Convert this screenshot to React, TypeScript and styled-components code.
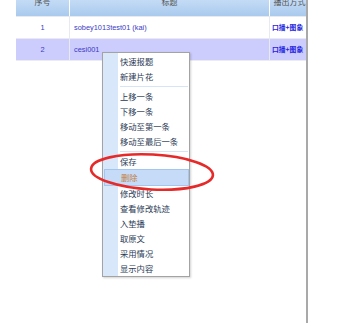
import styled, { createGlobalStyle } from 'styled-components';

const GlobalStyle = createGlobalStyle`
  html, body {
    margin: 0;
    padding: 0;
    background: #fff;
  }
  body {
    font-family: "Liberation Sans", "Noto Sans CJK SC", sans-serif;
  }
`;

const rows = [
  { no: '1', title: 'sobey1013test01 (kai)', mode: '口播+图象', selected: false },
  { no: '2', title: 'cesi001', mode: '口播+图象', selected: true },
];

const menuGroups = [
  ['快速报题', '新建片花'],
  ['上移一条', '下移一条', '移动至第一条', '移动至最后一条'],
  ['保存', '删除', '修改时长', '查看修改轨迹', '入垫播', '取原文', '采用情况', '显示内容'],
];

const App = () => {
  return (
    <Page>
      <GlobalStyle />
      <Frame>
        <Grid>
          <HeadCell>序号</HeadCell>
          <HeadCell>标题</HeadCell>
          <HeadCell>播出方式</HeadCell>
          {rows.map((r) => (
            <Row key={r.no} $selected={r.selected}>
              <Cell $center>{r.no}</Cell>
              <Cell>{r.title}</Cell>
              <ModeCell>{r.mode}</ModeCell>
            </Row>
          ))}
        </Grid>
      </Frame>

      <Menu>
        {menuGroups.map((group, gi) => (
          <div key={gi}>
            {gi > 0 && <Separator />}
            {group.map((label) => (
              <MenuItem key={label} $active={label === '删除'}>
                {label}
              </MenuItem>
            ))}
          </div>
        ))}
      </Menu>

      <Mark width="134" height="46" viewBox="0 0 134 46">
        <ellipse
          cx="63"
          cy="22"
          rx="61"
          ry="17.5"
          fill="none"
          stroke="#e62a2a"
          strokeWidth="2.6"
          transform="rotate(3 63 22)"
        />
      </Mark>
    </Page>
  );
};

const Page = styled.div`
  position: relative;
  width: 352px;
  height: 334px;
  overflow: hidden;
`;

const Frame = styled.div`
  margin-left: 16px;
  width: 290px;
  height: 323px;
  border-right: 2px solid #a9a9a9;
  overflow: hidden;
`;

const Grid = styled.div`
  display: grid;
  grid-template-columns: 54px 200px 40px;
  border-bottom: 1px solid #ececf0;
`;

const HeadCell = styled.div`
  height: 16px;
  line-height: 3px;
  text-align: center;
  font-family: "Noto Sans CJK SC", sans-serif;
  font-size: 8px;
  color: #555;
  white-space: nowrap;
  overflow: hidden;
  background: linear-gradient(#c4dbf5, #a9caee);
  border-right: 1px solid #fff;
`;

const Row = styled.div<{ $selected: boolean }>`
  display: contents;

  & > div {
    background: ${(p) => (p.$selected ? '#ccccfd' : '#fff')};
  }
`;

const Cell = styled.div<{ $center?: boolean }>`
  height: 21px;
  line-height: 21px;
  border-top: 1px solid #e9e9f2;
  border-right: 1px solid #e9e9f2;
  padding-left: ${(p) => (p.$center ? '0' : '4px')};
  text-align: ${(p) => (p.$center ? 'center' : 'left')};
  font-size: 7.4px;
  color: #3b3bc4;
  white-space: nowrap;
  overflow: hidden;
`;

const ModeCell = styled(Cell)`
  padding-left: 2px;
  font-family: "Noto Sans CJK SC", sans-serif;
  font-size: 6.8px;
  font-weight: 700;
  color: #1f1fe0;
`;

const Menu = styled.div`
  position: absolute;
  left: 102px;
  top: 52px;
  width: 86px;
  padding: 1px 0 0;
  border: 1px solid #a3a3a3;
  box-shadow: 1px 1px 2px rgba(0, 0, 0, 0.18);
  background: linear-gradient(to right, #d9e7fb 15px, #fff 15px);
`;

const MenuItem = styled.div<{ $active: boolean }>`
  height: 15px;
  line-height: 15px;
  margin-left: ${(p) => (p.$active ? '1px' : '0')};
  padding-left: ${(p) => (p.$active ? '16px' : '17px')};
  font-family: "Noto Sans CJK SC", sans-serif;
  font-size: 8.3px;
  color: ${(p) => (p.$active ? '#c4803a' : '#2b3a55')};
  background: ${(p) => (p.$active ? '#c5dbf7' : 'transparent')};
  border: ${(p) => (p.$active ? '1px solid #a3c6ef' : 'none')};
  white-space: nowrap;
`;

const Separator = styled.div`
  height: 1px;
  margin: 2px 1px 2px 17px;
  background: #d6e4f6;
`;

const Mark = styled.svg`
  position: absolute;
  left: 89px;
  top: 150px;
`;

export default App;
